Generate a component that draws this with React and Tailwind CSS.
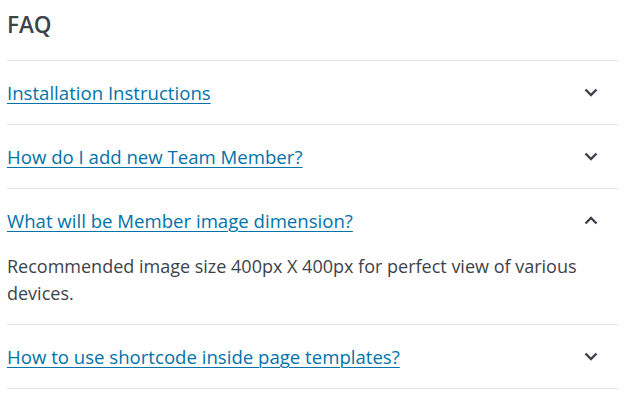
import React from "react";

const items = [
  { q: "Installation Instructions" },
  { q: "How do I add new Team Member?" },
  {
    q: "What will be Member image dimension?",
    open: true,
    a: "Recommended image size 400px X 400px for perfect view of various devices.",
  },
  { q: "How to use shortcode inside page templates?" },
];

function Chevron({ up }) {
  return (
    <svg width="14" height="9" viewBox="0 0 14 9" className="shrink-0">
      <polyline
        points={up ? "1.5,7.5 7,2 12.5,7.5" : "1.5,1.5 7,7 12.5,1.5"}
        fill="none"
        stroke="#3c434a"
        strokeWidth="2.4"
      />
    </svg>
  );
}

export default function App() {
  return (
    <div
      className="w-[637px] h-[398px] bg-white pl-[7px] pr-[19px] text-[#3c434a]"
      style={{ fontFamily: '"Open Sans", sans-serif' }}
    >
      <h2 className="text-[22.5px] leading-[32px] pt-[9px] pb-[19px] font-semibold text-[#3c434a]">
        FAQ
      </h2>
      <div className="border-t border-[#e5e5e5]">
        {items.map((it, i) => (
          <div key={i} className="border-b border-[#e5e5e5]">
            <div className="flex items-center justify-between py-[18px] pr-[20px]">
              <a
                href="#"
                className="text-[18.6px] leading-[27px] text-[#0073aa] underline underline-offset-[3px] decoration-1"
              >
                {it.q}
              </a>
              <Chevron up={it.open} />
            </div>
            {it.open && (
              <p className="text-[18px] leading-[27px] pb-[17px] mt-[1px] text-[#3c434a]">
                {it.a}
              </p>
            )}
          </div>
        ))}
      </div>
    </div>
  );
}
